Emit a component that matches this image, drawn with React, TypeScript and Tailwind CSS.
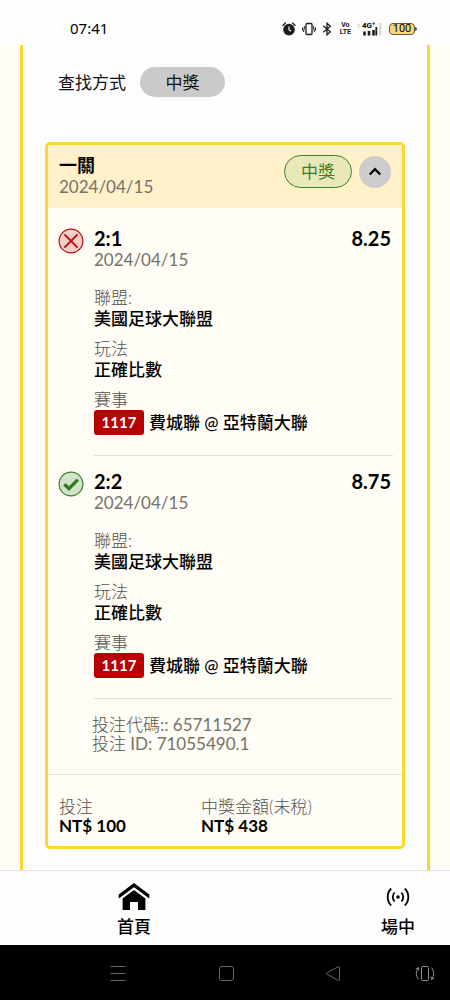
import React, { useState } from 'react';

const legs = [
  { score: '2:1', date: '2024/04/15', odds: '8.25', won: false },
  { score: '2:2', date: '2024/04/15', odds: '8.75', won: true },
];

function StatusBar() {
  return (
    <header className="flex h-[45px] items-center justify-between bg-[#fdfdfd] pl-[70px] pr-[33px] pt-3 text-black">
      <time className="font-['Noto_Sans',sans-serif] text-[15px]">07:41</time>
      <div className="flex items-center">
        {/* alarm */}
        <svg className="h-[14px] w-[14px]" viewBox="0 0 14 14">
          <circle cx="7" cy="7.6" r="5.8" fill="#1c1c1c" />
          <path d="M.8 3.4 3.4 1M13.2 3.4 10.6 1" stroke="#1c1c1c" strokeWidth="1.3" strokeLinecap="round" />
          <path d="M7 4.6v3.2l2 1.4" stroke="#fff" strokeWidth="1.1" fill="none" />
        </svg>
        {/* vibrate */}
        <svg className="ml-[6px] h-[14px] w-[14px]" viewBox="0 0 14 14" fill="none" stroke="#1c1c1c" strokeWidth="1.3">
          <rect x="4" y="1.5" width="6" height="11" rx="1" />
          <path d="M2.3 4v3l-.6 1v2M.5 5.500v3M11.700 4v3l.6 1v2M13.500 5.500v3" strokeWidth="1" />
        </svg>
        {/* bluetooth */}
        <svg className="ml-[6px] h-[14px] w-[10px]" viewBox="0 0 10 14" fill="none" stroke="#1c1c1c" strokeWidth="1.3">
          <path d="M1.3 3.8 8.300 9.800 5 12.800V1.200l3.300 3-7 6" />
        </svg>
        <span className="ml-2 flex flex-col items-center font-['Roboto',sans-serif] text-[7px] font-bold leading-[7px] text-[#1c1c1c]">
          <span>Vo</span>
          <span>LTE</span>
        </span>
        <span className="relative ml-[6px] h-[14px] w-[25px]">
          <span className="absolute left-[5px] top-0 font-['Roboto',sans-serif] text-[8px] font-bold leading-[7px]">4G⁺</span>
          <svg className="h-full w-full" viewBox="0 0 25 14">
            <path d="M0 3.2 1.6 1.4 3.2 3.2zM0 4.4 1.6 6.2 3.2 4.4z" fill="#c9c9c9" />
            <path d="M7.5 9.500v4M12 9v4.500M16.500 8v5.500" stroke="#1c1c1c" strokeWidth="2.600" />
            <path d="M19.300 5v8.500" stroke="#1c1c1c" strokeWidth="1.800" />
            <path d="M23.300 1v12.500" stroke="#d5d5d5" strokeWidth="2" />
          </svg>
        </span>
        <span className="ml-[7px] flex h-3 w-[26px] items-center justify-center rounded-[4px] border border-[#5d5946] bg-[#fbd777] font-['Roboto',sans-serif] text-[11px] leading-none">
          100
        </span>
        <span className="h-1 w-[2px] rounded-r bg-[#5d5946]" />
      </div>
    </header>
  );
}

function ResultIcon({ won }: { won: boolean }) {
  if (won) {
    return (
      <svg className="h-[26px] w-[26px]" viewBox="0 0 26 26" role="img" aria-label="won">
        <circle cx="13" cy="13" r="11.9" fill="#d5e3cc" stroke="#37812f" strokeWidth="1.2" />
        <path d="M6.3 13.2 11 17.6 19.8 8.6" fill="none" stroke="#2f7d23" strokeWidth="3.4" />
      </svg>
    );
  }
  return (
    <svg className="h-[26px] w-[26px]" viewBox="0 0 26 26" role="img" aria-label="lost">
      <circle cx="13" cy="13" r="11.9" fill="#f3cdc6" stroke="#b80d12" strokeWidth="1.2" />
      <path d="M6.4 6.4 19.6 19.6M19.6 6.4 6.4 19.6" stroke="#b80d12" strokeWidth="2" />
    </svg>
  );
}

function Leg({ leg }: { leg: (typeof legs)[number] }) {
  return (
    <li className="flex pl-[10px] pr-[9px] pt-[15px]">
      <div className="w-9 shrink-0">
        <ResultIcon won={leg.won} />
      </div>
      <div className="flex-1 border-b border-[#e3e0d8] pb-5">
        <div className="flex justify-between pr-[2px] text-[20px] font-bold leading-[21px] text-black">
          <h3>{leg.score}</h3>
          <span>{leg.odds}</span>
        </div>
        <p className="text-[#757269]">{leg.date}</p>
        <dl className="mt-[17px] flex flex-col gap-[9px]">
          <div>
            <dt className="font-light text-[#55524c]">聯盟:</dt>
            <dd className="font-medium text-black">美國足球大聯盟</dd>
          </div>
          <div>
            <dt className="font-light text-[#55524c]">玩法</dt>
            <dd className="font-medium text-black">正確比數</dd>
          </div>
          <div>
            <dt className="font-light text-[#55524c]">賽事</dt>
            <dd className="flex items-center gap-[5px] font-medium text-black">
              <span className="flex h-[25px] w-[50px] items-center justify-center rounded-[3px] bg-[#b70004] text-[15px] font-bold text-white">
                1117
              </span>
              <span>費城聯 @ 亞特蘭大聯</span>
            </dd>
          </div>
        </dl>
      </div>
    </li>
  );
}

function BetCard() {
  const [open, setOpen] = useState(true);

  return (
    <article className="mx-[22px] mt-[45px] overflow-hidden rounded-[5px] border-[3px] border-[#fdd731] bg-[#fffdf5]">
      <div className="flex items-start justify-between bg-[#fff1c9] px-[11px] pb-5 pt-[10px]">
        <div className="-mb-[10px]">
          <h2 className="text-[18px] font-bold leading-[21px] text-black">一關</h2>
          <p className="text-[#757269]">2024/04/15</p>
        </div>
        <div className="flex items-center gap-[7px]">
          <span className="flex h-[33px] w-[68px] items-center justify-center rounded-full border border-[#37812f] bg-[#e9e8b9] text-[#37812f]">
            中獎
          </span>
          <button
            type="button"
            aria-label="toggle"
            aria-expanded={open}
            onClick={() => setOpen(!open)}
            className="flex h-8 w-8 items-center justify-center rounded-full bg-[#cccccc]"
          >
            <svg className="h-3 w-3" viewBox="0 0 12 12" fill="none" stroke="#000" strokeWidth="2.2">
              <path d="M.8 8.6 6 3.2l5.2 5.4" />
            </svg>
          </button>
        </div>
      </div>

      {open && (
        <>
          <ul className="pt-[5px]">
            {legs.map((leg) => (
              <Leg key={leg.score} leg={leg} />
            ))}
          </ul>
          <div className="border-b border-[#e3e0d8] pb-[21px] pl-11 pt-4 leading-[19px] text-[#757269]">
            <p><span className="font-light text-[#55524c]">投注代碼</span>:: 65711527</p>
            <p><span className="font-light text-[#55524c]">投注</span> ID: 71055490.1</p>
          </div>
        </>
      )}

      <dl className="flex pb-[11px] pl-[11px] pt-[22px] leading-[19px]">
        <div className="w-[142px]">
          <dt className="font-light text-[#55524c]">投注</dt>
          <dd className="font-bold text-black">NT$ 100</dd>
        </div>
        <div>
          <dt className="font-light text-[#55524c]">中獎金額(未稅)</dt>
          <dd className="font-bold text-black">NT$ 438</dd>
        </div>
      </dl>
    </article>
  );
}

function TabBar() {
  return (
    <nav className="flex h-[75px] items-end justify-between border-t border-[#e2e2e2] bg-[#fdfdfd] pb-2 pl-28 pr-[30px] font-medium text-black">
      <a href="#home" className="flex w-11 flex-col items-center gap-[5px]">
        <svg className="h-[29px] w-8" viewBox="0 0 32 29">
          <path d="M16 1 .7 12.6v4L16 5.2l15.3 11.4v-4z" />
          <path d="M16 8 4.6 16.6V28H12v-8h8v8h7.400V16.600z" />
        </svg>
        <span>首頁</span>
      </a>
      <a href="#live" className="flex w-11 flex-col items-center gap-[9px]">
        <svg className="h-5 w-6" viewBox="0 0 24 20" fill="none" stroke="#000" strokeWidth="1.8">
          <circle cx="12" cy="10" r="1.8" fill="#000" stroke="none" />
          <path d="M8.600 5.500a6.500 6.500 0 0 0 0 9M15.400 5.500a6.500 6.500 0 0 1 0 9" />
          <path d="M5.200 1.500a12 12 0 0 0 0 17M18.800 1.500a12 12 0 0 1 0 17" />
        </svg>
        <span>場中</span>
      </a>
    </nav>
  );
}

function SystemBar() {
  return (
    <footer className="flex h-[55px] items-center bg-black pl-[106px] pr-[13px] text-[#666]">
      <div className="flex gap-[84px]">
        <button type="button" aria-label="menu">
          <svg className="h-6 w-6" viewBox="0 0 24 24" stroke="currentColor">
            <path d="M4.500 5.500h15M4.500 12.500h15M4.500 19.500h15" />
          </svg>
        </button>
        <button type="button" aria-label="home">
          <svg className="h-6 w-6" viewBox="0 0 24 24" fill="none" stroke="currentColor">
            <rect x="5.500" y="5.500" width="14" height="14" rx="2.500" />
          </svg>
        </button>
        <button type="button" aria-label="back">
          <svg className="h-6 w-6" viewBox="0 0 24 24" fill="none" stroke="currentColor" strokeLinejoin="round">
            <path d="M17.500 6.200v12.600a.7.700 0 0 1-1 .6L4.800 13.100a.7.700 0 0 1 0-1.200l11.700-6.300a.7.700 0 0 1 1 .6z" />
          </svg>
        </button>
      </div>
      <button type="button" aria-label="rotate" className="ml-auto">
        <svg className="h-6 w-6" viewBox="0 0 24 24" fill="none" stroke="#909090">
          <rect x="8.500" y="5.500" width="7" height="14" rx="1" />
          <path d="M5.500 6.500q-4.500 6 0 12M2.800 8l2.700-1.500.5 3M18.500 6.500q4.500 6 0 12M21.200 17l-2.700 1.500-.5-3" />
        </svg>
      </button>
    </footer>
  );
}

export default function App() {
  return (
    <div className="flex min-h-screen flex-col bg-[#fffdf5] font-['Lato','Noto_Sans_CJK_TC',sans-serif] text-[17px] leading-[21px]">
      <StatusBar />
      <main className="mx-5 flex-1 border-x-[3px] border-[#fdd731] bg-[#fdfdfd] pb-[21px] pt-[22px]">
        <div className="flex items-center gap-[14px] pl-[35px]">
          <span className="text-[#111]">查找方式</span>
          <button type="button" className="h-[30px] w-[85px] rounded-full bg-[#cacaca] text-[#111]">
            中獎
          </button>
        </div>
        <BetCard />
      </main>
      <TabBar />
      <SystemBar />
    </div>
  );
}
